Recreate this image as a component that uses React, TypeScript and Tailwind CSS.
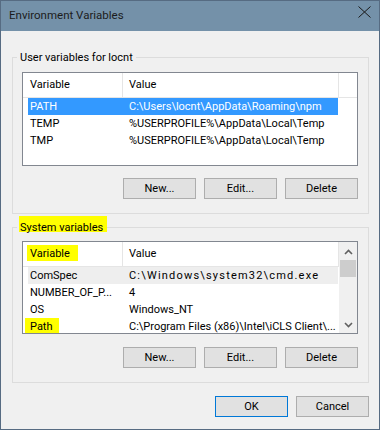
import React from "react";

const FONT = "font-['Roboto',sans-serif]";

function Btn({ label, primary }: { label: string; primary?: boolean }) {
  return (
    <div
      className={
        "w-[73px] h-[21px] flex items-center justify-center bg-[#e1e1e1] border text-black text-[11px] leading-[16px] " +
        (primary ? "border-[#0078d7]" : "border-[#adadad]")
      }
    >
      {label}
    </div>
  );
}

type Row = { n: string; v: string; sel?: boolean; hover?: boolean; hiName?: boolean; wide?: boolean };

function ListRow({ r }: { r: Row }) {
  const bg = r.sel ? "bg-[#3399ff] text-white" : r.hover ? "bg-[#eeeeee] text-black" : "text-black";
  return (
    <div className={"ml-[5px] w-[310px] h-[17px] flex shrink-0 leading-[17px] " + bg}>
      <div className="w-[94px] pl-[2px] whitespace-nowrap">
        {r.hiName ? (
          <span className="relative">
            <span className="absolute left-[-5px] top-[-2px] w-[34px] h-[16px] bg-[#ffff00]" />
            <span className="relative">{r.n}</span>
          </span>
        ) : (
          r.n
        )}
      </div>
      <div className={"flex-1 pl-[7px] whitespace-nowrap overflow-hidden " + (r.wide ? "tracking-[1.2px]" : "")}>
        {r.v}
      </div>
    </div>
  );
}

function Header({ hi, width }: { hi?: boolean; width: string }) {
  return (
    <div className={"h-[25px] flex shrink-0 border-b border-[#e5e5e5] " + width}>
      <div className="w-[100px] h-[24px] border-r border-[#e5e5e5] pl-[7px] flex items-center leading-[16px]">
        {hi ? (
          <span className="relative">
            <span className="absolute left-[-3px] top-[-1px] w-[51px] h-[16px] bg-[#ffff00]" />
            <span className="relative">Variable</span>
          </span>
        ) : (
          "Variable"
        )}
      </div>
      <div className="w-[216px] h-[24px] border-r border-[#e5e5e5] pl-[6px] flex items-center leading-[16px]">
        Value
      </div>
    </div>
  );
}

function Chevron({ up }: { up?: boolean }) {
  return (
    <svg width="9" height="6" viewBox="0 0 9 6">
      <polyline
        points={up ? "1,5 4.5,1.5 8,5" : "1,1 4.5,4.5 8,1"}
        fill="none"
        stroke="#606060"
        strokeWidth="1.6"
      />
    </svg>
  );
}

export default function App() {
  const userRows: Row[] = [
    { n: "PATH", v: "C:\\Users\\locnt\\AppData\\Roaming\\npm", sel: true },
    { n: "TEMP", v: "%USERPROFILE%\\AppData\\Local\\Temp" },
    { n: "TMP", v: "%USERPROFILE%\\AppData\\Local\\Temp" },
  ];
  const sysRows: Row[] = [
    { n: "ComSpec", v: "C:\\Windows\\system32\\cmd.exe", hover: true, wide: true },
    { n: "NUMBER_OF_P...", v: "4" },
    { n: "OS", v: "Windows_NT" },
    { n: "Path", v: "C:\\Program Files (x86)\\Intel\\iCLS Client\\...", hiName: true },
  ];

  return (
    <div className={"w-[380px] h-[430px] border border-[#566b82] bg-[#f0f0f0] flex flex-col text-[11px] text-black " + FONT}>
      {/* Title bar */}
      <div className="h-[30px] shrink-0 bg-[#7491a9] flex justify-between pl-[8px] pr-[8px]">
        <div className="self-center -mt-[2px] text-[11.5px] text-[#1c1c1c] leading-[16px]">Environment Variables</div>
        <svg className="mt-[5px]" width="13" height="12" viewBox="0 0 13 12">
          <path d="M0.5 0.5 L12.5 11.5 M12.5 0.5 L0.5 11.5" stroke="#1a1a1a" strokeWidth="1" fill="none" />
        </svg>
      </div>

      {/* Body */}
      <div className="flex flex-col pl-[11px] pr-[10px]">
        {/* User variables group */}
        <div className="relative mt-[26px] border border-[#dcdcdc] pt-[14px] pl-[9px] pr-[10px] pb-[14px] flex flex-col">
          <span className="absolute -top-[8px] left-[4px] px-[3px] bg-[#f0f0f0] leading-[15px]">
            User variables for locnt
          </span>
          <div className="h-[94px] border border-[#828790] bg-white flex flex-col overflow-hidden">
            <Header width="w-full" />
            {userRows.map((r) => (
              <ListRow key={r.n} r={r} />
            ))}
          </div>
          <div className="mt-[12px] flex justify-end gap-[8px]">
            <Btn label="New..." />
            <Btn label="Edit..." />
            <Btn label="Delete" />
          </div>
        </div>

        {/* System variables group */}
        <div className="relative mt-[13px] border border-[#dcdcdc] pt-[13px] pl-[9px] pr-[10px] pb-[14px] flex flex-col">
          <span className="absolute -top-[8px] left-[4px] px-[3px] bg-[#f0f0f0] leading-[15px]">
            <span className="absolute left-[2px] top-[-4px] w-[88px] h-[16px] bg-[#ffff00]" />
            <span className="relative">System variables</span>
          </span>
          <div className="h-[93px] border border-[#828790] bg-white flex overflow-hidden">
            <div className="w-[316px] flex flex-col overflow-hidden">
              <Header hi width="w-[316px]" />
              {sysRows.map((r) => (
                <ListRow key={r.n} r={r} />
              ))}
            </div>
            <div className="w-[18px] flex flex-col bg-[#f0f0f0]">
              <div className="h-[17px] flex items-center justify-center pt-[2px]">
                <Chevron up />
              </div>
              <div className="mt-[1px] mx-[1px] h-[17px] bg-[#cdcdcd]" />
              <div className="flex-1" />
              <div className="h-[17px] flex items-center justify-center">
                <Chevron />
              </div>
            </div>
          </div>
          <div className="mt-[13px] flex justify-end gap-[8px]">
            <Btn label="New..." />
            <Btn label="Edit..." />
            <Btn label="Delete" />
          </div>
        </div>

        {/* Footer */}
        <div className="mt-[13px] flex justify-end gap-[8px]">
          <Btn label="OK" primary />
          <Btn label="Cancel" />
        </div>
      </div>
    </div>
  );
}
